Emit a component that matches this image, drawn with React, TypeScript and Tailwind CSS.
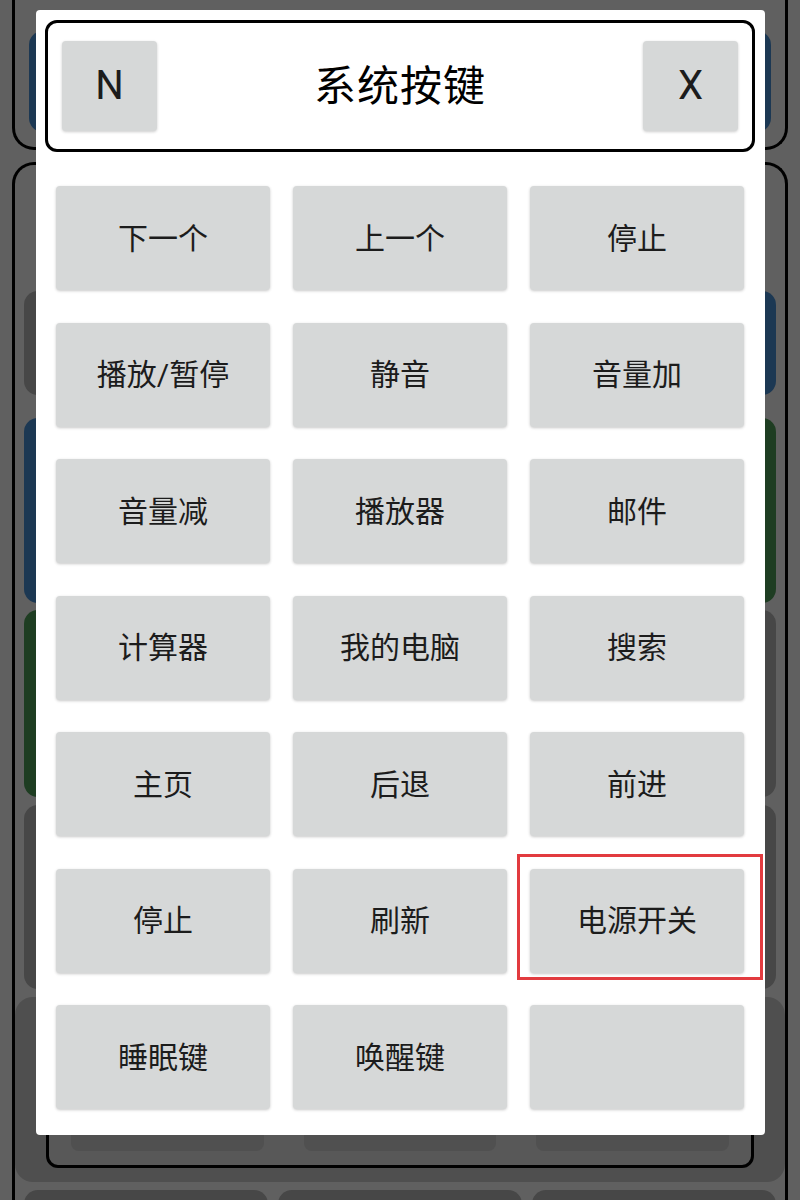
const keys = [
	"下一个",
	"上一个",
	"停止",
	"播放/暂停",
	"静音",
	"音量加",
	"音量减",
	"播放器",
	"邮件",
	"计算器",
	"我的电脑",
	"搜索",
	"主页",
	"后退",
	"前进",
	"停止",
	"刷新",
	"电源开关",
	"睡眠键",
	"唤醒键",
	"",
];

// dimmed page that sits under the dialog
const Backdrop = () => {
	const rows = [
		{ h: "h-[104px]", mt: "mt-0", cells: ["bg-[#474747]", "bg-[#474747]", "bg-[#1c3853]"] },
		{ h: "h-[185px]", mt: "mt-[23px]", cells: ["bg-[#1c3853]", "bg-[#474747]", "bg-[#1e3d22]"] },
		{ h: "h-[187px]", mt: "mt-[7px]", cells: ["bg-[#1e3d22]", "bg-[#474747]", "bg-[#474747]"] },
		{ h: "h-[184px]", mt: "mt-[8px]", cells: ["bg-[#474747]", "bg-[#474747]", "bg-[#474747]"] },
	];

	return (
		<div className="h-full bg-[#606060] px-[12px]">
			<div className="h-[150px] rounded-b-[22px] border-[3px] border-t-0 border-black px-[14px] pt-[31px]">
				<div className="h-[101px] rounded-[14px] bg-[#1c3853]" />
			</div>

			<div className="mt-[12px] rounded-t-[22px] border-[3px] border-b-0 border-black px-[9px] pt-[126px]">
				{rows.map((row, i) => (
					<div key={i} className={`grid grid-cols-3 gap-x-[10px] ${row.mt}`}>
						{row.cells.map((c, j) => (
							<div key={j} className={`${row.h} rounded-[14px] ${c}`} />
						))}
					</div>
				))}

				<div className="-mx-[9px] mt-[8px] h-[185px] rounded-[18px] bg-[#4f4f4f] px-[31px] pt-[14px]">
					<div className="flex h-[157px] items-end gap-x-[40px] rounded-[12px] border-[3px] border-black bg-[#585858] px-[22px] pb-[14px]">
						<div className="h-[40px] flex-1 rounded-[8px] bg-[#505050]" />
						<div className="h-[40px] flex-1 rounded-[8px] bg-[#505050]" />
						<div className="h-[40px] flex-1 rounded-[8px] bg-[#505050]" />
					</div>
				</div>

				<div className="mt-[8px] grid grid-cols-3 gap-x-[10px]">
					<div className="h-[120px] rounded-[14px] bg-[#474747]" />
					<div className="h-[120px] rounded-[14px] bg-[#474747]" />
					<div className="h-[120px] rounded-[14px] bg-[#474747]" />
				</div>
			</div>
		</div>
	);
};

const KeyButton = ({ label }: { label: string }) => (
	<button className="flex h-[104px] w-full items-center justify-center rounded-[4px] bg-[#d6d8d8] text-[30px] text-[#1c1c1c] shadow-[0_1px_3px_rgba(0,0,0,0.22)]">
		{label}
	</button>
);

export default function App() {
	return (
		<div
			className="relative h-[1200px] w-[800px] overflow-hidden"
			style={{ fontFamily: 'Roboto, "Noto Sans CJK SC", sans-serif' }}
		>
			<Backdrop />

			{/* system keys dialog */}
			<div className="absolute left-[36px] top-[10px] h-[1125px] w-[729px] rounded-[4px] bg-white pl-[9px] pr-[10px] pt-[10px]">
				<div className="flex h-[132px] items-center justify-between rounded-[12px] border-[3px] border-black px-[14px]">
					<button className="flex h-[90px] w-[95px] items-center justify-center rounded-[4px] bg-[#d6d8d8] text-[40px] text-[#1c1c1c] shadow-[0_1px_3px_rgba(0,0,0,0.2)]">
						N
					</button>
					<h2 className="text-[42px] tracking-[1px] text-black">系统按键</h2>
					<button className="flex h-[90px] w-[95px] items-center justify-center rounded-[4px] bg-[#d6d8d8] text-[40px] text-[#1c1c1c] shadow-[0_1px_3px_rgba(0,0,0,0.2)]">
						X
					</button>
				</div>

				<div className="mt-[34px] grid grid-cols-3 gap-x-[23px] gap-y-[32.5px] px-[11px]">
					{keys.map((key, index) =>
						key === "电源开关" ? (
							<div key={index} className="relative">
								<KeyButton label={key} />
								<div className="pointer-events-none absolute -left-[13px] -top-[15px] h-[126px] w-[246px] border-[3px] border-[#e23b3f]" />
							</div>
						) : (
							<KeyButton key={index} label={key} />
						),
					)}
				</div>
			</div>
		</div>
	);
}
